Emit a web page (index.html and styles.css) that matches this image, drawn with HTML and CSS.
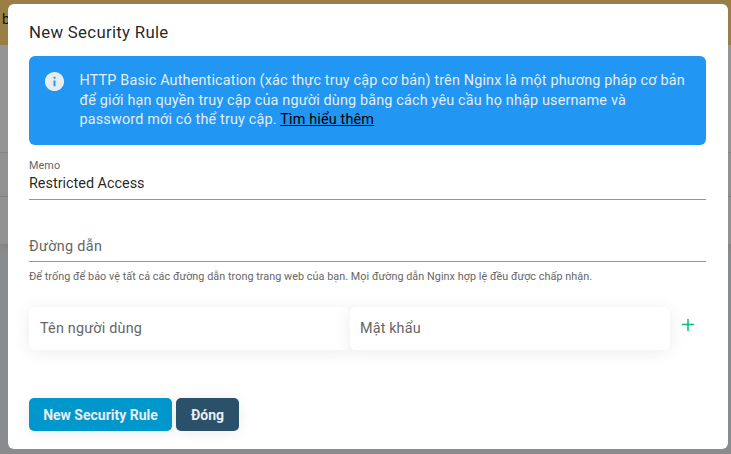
FILE: index.html
```
<!DOCTYPE html>
<html lang="vi">
<head>
<meta charset="utf-8">
<title>New Security Rule</title>
<link rel="stylesheet" href="styles.css">
</head>
<body>
<div class="page">
  <div class="page-banner">b</div>
  <div class="page-panel"></div>
  <div class="page-row"></div>
  <div class="page-row page-row-last"></div>
</div>
<main class="dialog" role="dialog">
  <h1 class="title">New Security Rule</h1>
  <section class="alert">
    <svg class="alert-icon" viewBox="0 0 24 24"><path d="M12 2C6.48 2 2 6.48 2 12s4.480 10 10 10 10-4.480 10-10S17.520 2 12 2zm1 15h-2v-6h2v6zm0-8h-2V7h2v2z"/></svg>
    <p class="alert-text">HTTP Basic Authentication (xác thực truy cập cơ bản) trên Nginx là một phương pháp cơ bản<br>để giới hạn quyền truy cập của người dùng bằng cách yêu cầu họ nhập username và<br>password mới có thể truy cập. <a class="link">Tìm hiểu thêm</a></p>
  </section>
  <div class="field">
    <label class="field-label">Memo</label>
    <div class="field-value">Restricted Access</div>
  </div>
  <div class="field field-path">
    <div class="field-placeholder">Đường dẫn</div>
  </div>
  <p class="hint">Để trống để bảo vệ tất cả các đường dẫn trong trang web của bạn. Mọi đường dẫn Nginx hợp lệ đều được chấp nhận.</p>
  <div class="credentials">
    <div class="box">Tên người dùng</div>
    <div class="box">Mật khẩu</div>
    <svg class="add" viewBox="0 0 12 12"><path d="M0 5.500h12M6 0v12"/></svg>
  </div>
  <div class="actions">
    <button class="btn btn-primary">New Security Rule</button>
    <button class="btn btn-dark">Đóng</button>
  </div>
</main>
</body>
</html>
```
FILE: styles.css
```
* { box-sizing: border-box; }
body {
  margin: 0;
  width: 731px;
  height: 454px;
  overflow: hidden;
  position: relative;
  background: #8a8b8d;
  font-family: Roboto, "Liberation Sans", sans-serif;
  color: rgba(0, 0, 0, 0.87);
}
.page { height: 454px; }
.page-banner {
  height: 45px;
  padding: 10px 0 0 2px;
  background: #997f46;
  font-size: 14.4px;
  line-height: 19px;
}
.page-panel { height: 108px; background: #959595; border-bottom: 1px solid #858585; }
.page-row { height: 44px; background: #929292; border-bottom: 1px solid #858585; }
.page-row-last { height: 47px; border: 0; box-shadow: 0 2px 8px rgba(0, 0, 0, 0.1); }
.dialog {
  position: absolute;
  left: 8px;
  top: 4px;
  width: 720px;
  height: 445px;
  padding: 17px 22px 0 21px;
  background: #fff;
  border-radius: 6px;
}
.title {
  margin: 0;
  height: 35px;
  font-size: 16.8px;
  line-height: 23px;
  font-weight: 400;
  letter-spacing: 0.3px;
}
.alert {
  display: flex;
  height: 89px;
  padding: 14px 16px 0 14px;
  border-radius: 6px;
  background: #2196f3;
}
.alert-icon { width: 23px; height: 23px; flex: none; fill: #e4edf0; }
.alert-text {
  margin: 1px 0 0 13.5px;
  color: #e4edf0;
  font-size: 14.4px;
  line-height: 19.6px;
  letter-spacing: 0.165px;
  white-space: nowrap;
}
.link { color: #000; text-decoration: underline; }
.field { height: 55px; padding-top: 14px; border-bottom: 1px solid #949494; }
.field-label {
  display: block;
  font-size: 10.8px;
  line-height: 13px;
  letter-spacing: 0.1px;
  color: #666;
}
.field-value { font-size: 14.4px; line-height: 23px; letter-spacing: 0; }
.field-path { height: 62px; padding-top: 36px; }
.field-placeholder { font-size: 14.4px; line-height: 22px; letter-spacing: 0.32px; color: #666; }
.hint {
  margin: 7px 0 0;
  height: 38px;
  font-size: 10.8px;
  line-height: 15px;
  letter-spacing: 0.048px;
  white-space: nowrap;
  color: #666;
}
.credentials { display: flex; height: 43px; }
.box {
  width: 321px;
  padding-left: 11px;
  border-radius: 6px;
  background: #fff;
  box-shadow: 0 2px 18px rgba(0, 0, 0, 0.08);
  font-size: 14.4px;
  line-height: 43px;
  letter-spacing: 0.2px;
  color: #666;
}
.box + .box { width: 320px; padding-left: 10px; letter-spacing: 0.13px; }
.add {
  width: 12px;
  height: 12px;
  margin: 12px 0 0 12px;
  fill: none;
  stroke: #06bd78;
  stroke-width: 1.5;
}
.actions { display: flex; gap: 4px; margin-top: 48px; }
.btn {
  height: 33px;
  padding: 0;
  border: 0;
  border-radius: 5px;
  color: #e6eef2;
  font: 700 14px/32px Roboto, sans-serif;
  box-shadow: 0 2px 14px rgba(0, 0, 0, 0.08);
}
.btn-primary { width: 143px; background: #0097cd; }
.btn-dark { width: 63px; background: #2b506a; }
```
